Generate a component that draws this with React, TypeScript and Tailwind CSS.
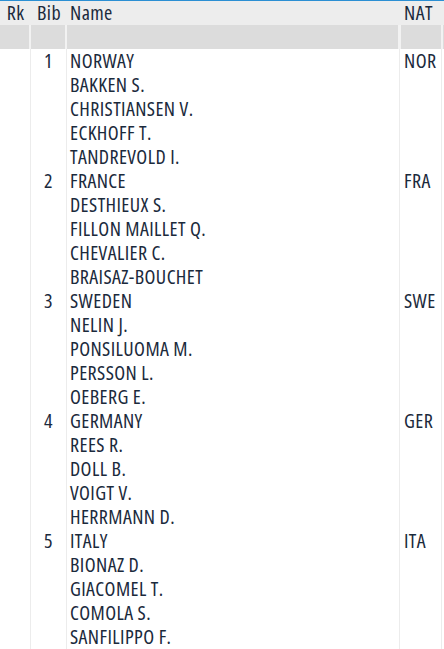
const teams = [
  { bib: 1, nat: 'NOR', name: 'NORWAY', members: ['BAKKEN S.', 'CHRISTIANSEN V.', 'ECKHOFF T.', 'TANDREVOLD I.'] },
  { bib: 2, nat: 'FRA', name: 'FRANCE', members: ['DESTHIEUX S.', 'FILLON MAILLET Q.', 'CHEVALIER C.', 'BRAISAZ-BOUCHET'] },
  { bib: 3, nat: 'SWE', name: 'SWEDEN', members: ['NELIN J.', 'PONSILUOMA M.', 'PERSSON L.', 'OEBERG E.'] },
  { bib: 4, nat: 'GER', name: 'GERMANY', members: ['REES R.', 'DOLL B.', 'VOIGT V.', 'HERRMANN D.'] },
  { bib: 5, nat: 'ITA', name: 'ITALY', members: ['BIONAZ D.', 'GIACOMEL T.', 'COMOLA S.', 'SANFILIPPO F.'] },
]

const App = () => {
  return (
    <div className="w-[444px] h-[649px] overflow-hidden bg-white text-[#1b2a3c] text-[20px] leading-[24px] tracking-[0.4px] font-medium font-stretch-condensed font-['Open_Sans',sans-serif]">
      {/* header */}
      <div className='flex h-[25px] bg-[#ededed] border-t border-[#2b8fd3]'>
        <div className='w-[31px] text-center'>Rk</div>
        <div className='w-[36px] text-center'>Bib</div>
        <div className='w-[333px] pl-[3px]'>Name</div>
        <div className='w-[42px] pl-[4px]'>NAT</div>
        <div className='flex-1'></div>
      </div>
      {/* filter row */}
      <div className='flex h-[24px] bg-[#f2f2f2]'>
        <div className='w-[29px] mr-[2px] bg-[#dcdcdc]'></div>
        <div className='w-[34px] mr-[2px] bg-[#dcdcdc]'></div>
        <div className='w-[331px] mr-[3px] bg-[#dcdcdc]'></div>
        <div className='w-[40px] mr-[2px] bg-[#dcdcdc]'></div>
        <div className='flex-1 bg-[#dcdcdc]'></div>
      </div>
      {/* teams */}
      {teams.map((t) => (
        <div key={t.bib} className='flex'>
          <div className='w-[31px] border-r border-[#ececec]'></div>
          <div className='w-[36px] border-r border-[#ececec] text-center'>{t.bib}</div>
          <div className='w-[333px] border-r border-[#ececec] pl-[3px]'>
            <div>{t.name}</div>
            {t.members.map((m) => (
              <div key={m}>{m}</div>
            ))}
          </div>
          <div className='w-[42px] border-r border-[#ececec] pl-[4px]'>{t.nat}</div>
          <div className='flex-1'></div>
        </div>
      ))}
    </div>
  )
}

export default App
